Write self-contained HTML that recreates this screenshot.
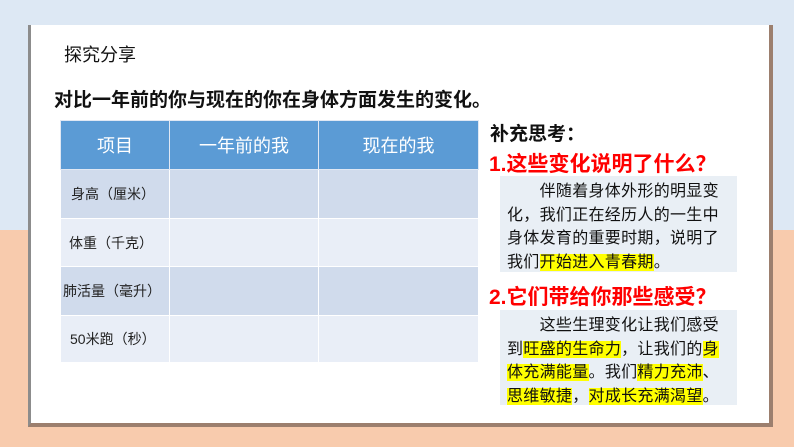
<!DOCTYPE html><html><head><meta charset="utf-8"><style>
*{margin:0;padding:0;box-sizing:border-box}
body{width:794px;height:447px;overflow:hidden;position:relative;background:#f8cbad;font-family:"Liberation Sans","Noto Sans CJK SC",sans-serif}
.top{position:absolute;left:0;top:0;width:794px;height:230px;background:#dde8f4}
.card{position:absolute;left:28px;top:25px;width:745px;height:402px;background:#fff;border-left:3px solid #8c8c8c;border-bottom:4px solid #9c7f6e;border-right:4px solid #9c7f6e}
.t{position:absolute;white-space:nowrap}
table{position:absolute;left:60px;top:120px;border-collapse:collapse}
td{border:1px solid #fff;font-size:14px;color:#222;padding-left:4px}
th{background:#5b9bd5;color:#fff;font-size:18px;font-weight:normal;height:49px;border:1px solid #e0e8f4}
tr.d td{background:#d0dbec}tr.l td{background:#e9eef7}
.box{position:absolute;left:500px;width:237px;background:#e9eff5;font-size:16px;line-height:23.5px;color:#111;padding:4px 0 0 7px;white-space:nowrap;letter-spacing:0.3px}
.h{background:#ffff00}
.red{color:#ff0000;font-weight:bold;font-size:21px}
</style></head><body>
<div class="top"></div>
<div class="card"></div>
<div class="t" style="left:64px;top:41px;font-size:18px;color:#111">探究分享</div>
<div class="t" style="left:54px;top:85px;font-size:19px;font-weight:bold;color:#111">对比一年前的你与现在的你在身体方面发生的变化。</div>
<table>
<tr><th style="width:109px">项目</th><th style="width:149px">一年前的我</th><th style="width:160px">现在的我</th></tr>
<tr class="d"><td style="height:49px;padding-left:10px">身高（厘米）</td><td></td><td></td></tr>
<tr class="l"><td style="height:48px;padding-left:8px">体重（千克）</td><td></td><td></td></tr>
<tr class="d"><td style="height:49px;padding-left:2px">肺活量（毫升）</td><td></td><td></td></tr>
<tr class="l"><td style="height:47px;padding-left:9px">50米跑（秒）</td><td></td><td></td></tr>
</table>
<div class="t" style="left:490px;top:119px;font-size:19px;font-weight:bold;color:#111">补充思考：</div>
<div class="t red" style="left:489px;top:148px">1.这些变化说明了什么？</div>
<div class="box" style="top:176px;height:96px">&emsp;&emsp;伴随着身体外形的明显变<br>化，我们正在经历人的一生中<br>身体发育的重要时期，说明了<br>我们<span class="h">开始进入青春期</span>。</div>
<div class="t red" style="left:489px;top:281px">2.它们带给你那些感受？</div>
<div class="box" style="top:310px;height:95px">&emsp;&emsp;这些生理变化让我们感受<br>到<span class="h">旺盛的生命力</span>，让我们的<span class="h">身</span><br><span class="h">体充满能量</span>。我们<span class="h">精力充沛</span>、<br><span class="h">思维敏捷</span>，<span class="h">对成长充满渴望</span>。</div>
</body></html>
